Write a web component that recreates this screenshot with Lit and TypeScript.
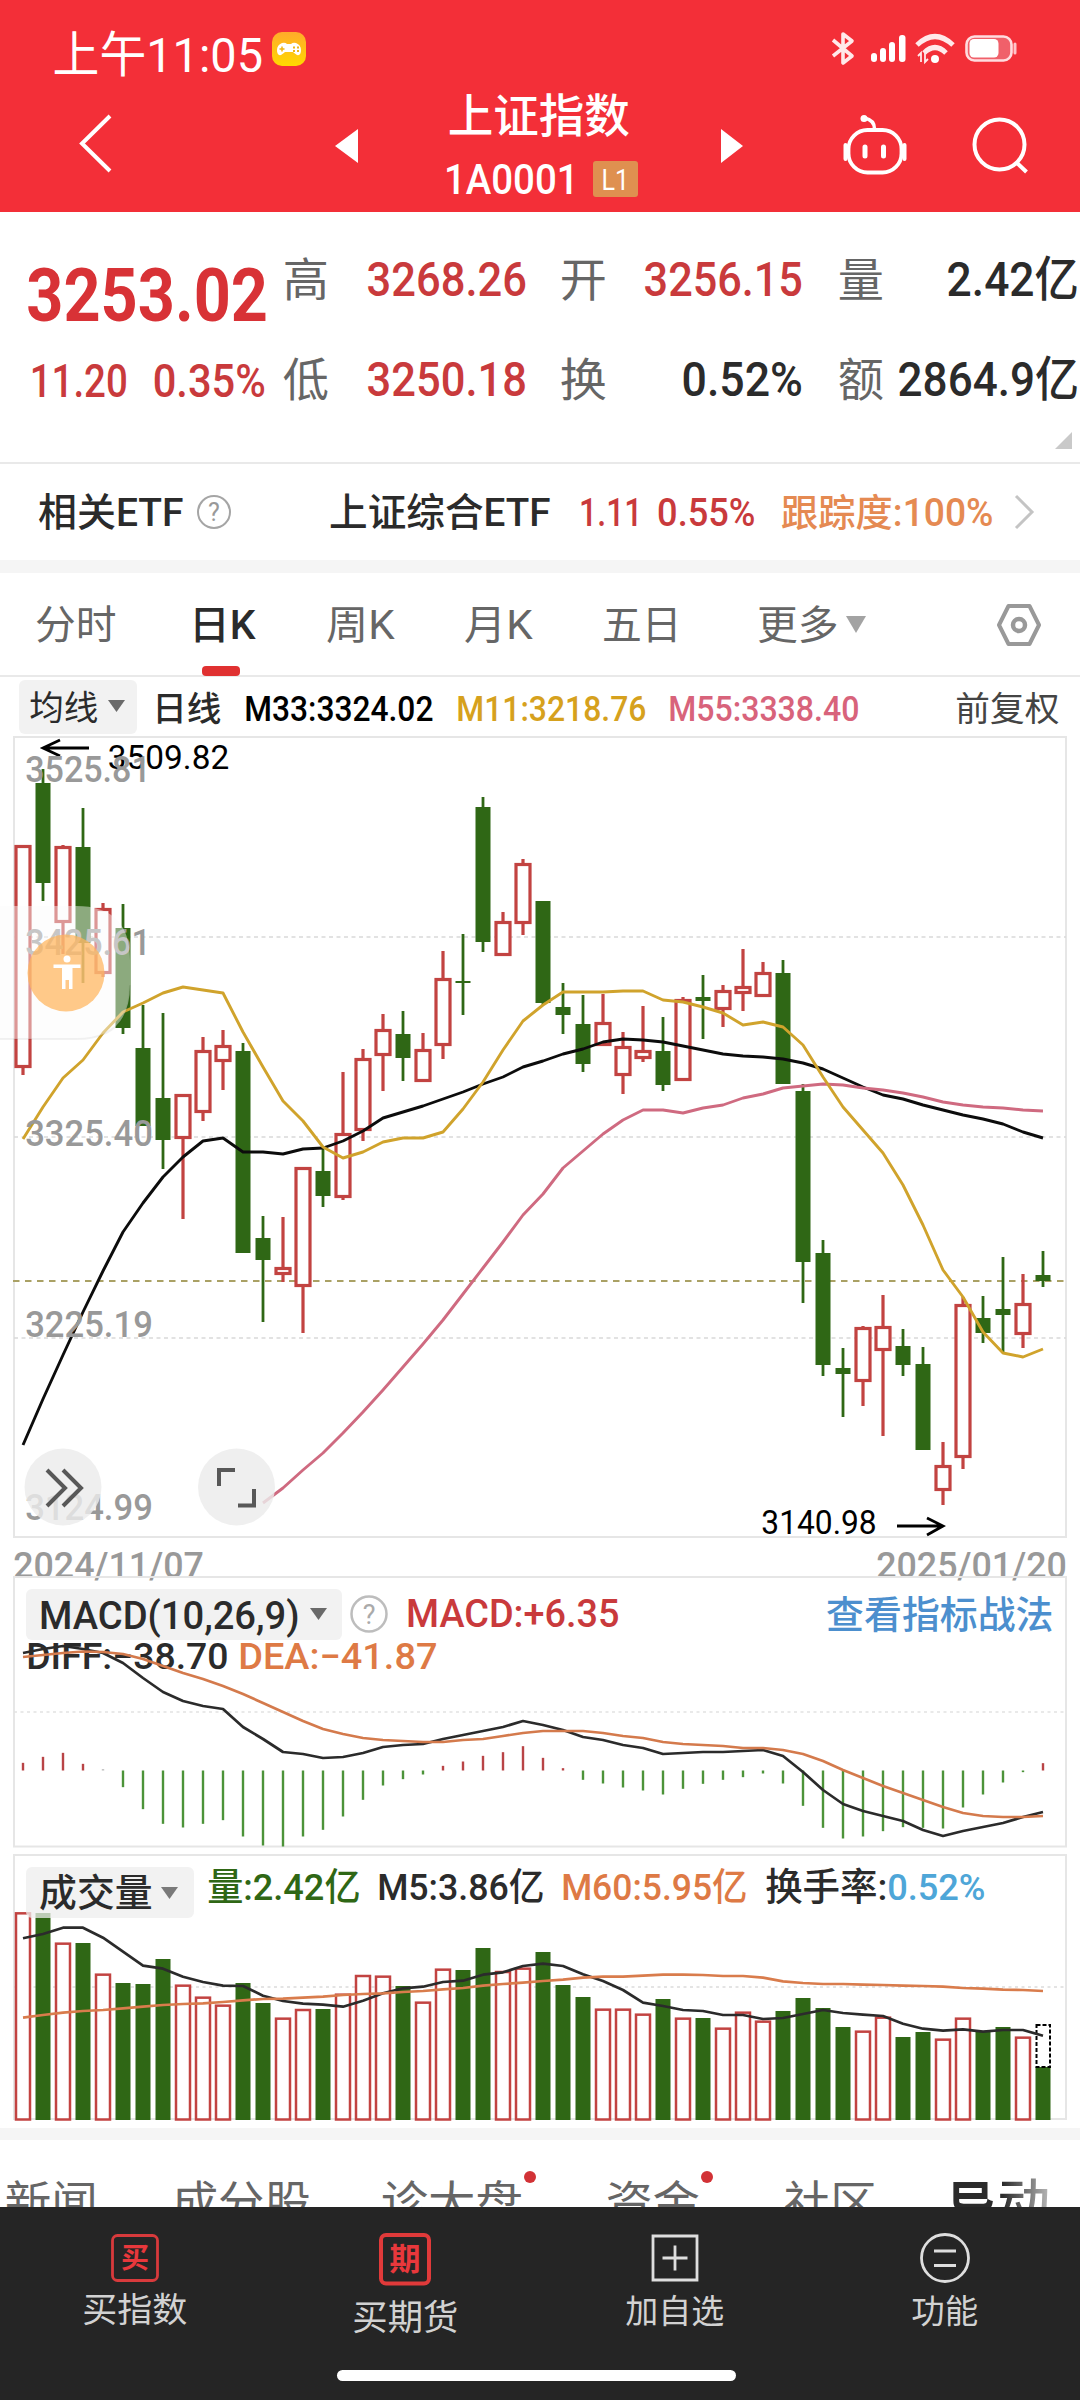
import { LitElement, html, svg, css } from "lit";
import { customElement } from "lit/decorators.js";

const CAP = 0.711;

/** Text set to a fixed ink width; the box is exactly one cap height tall. */
const fit = (text: string, width: number, size: number, cls = "") => html`
  <svg class="fit ${cls}" width=${width} height=${Math.round(size * CAP)}>
    <text x=${-size * 0.05} y=${Math.round(size * CAP)} font-size=${size}
      textLength=${width + size * 0.09} lengthAdjust="spacingAndGlyphs">${text}</text>
  </svg>`;

/** The same, for labels placed on a chart canvas. y is the baseline. */
const mark = (text: string, x: number, y: number, width: number, size: number, cls: string) => svg`
  <text class=${cls} x=${x - size * 0.05} y=${y} font-size=${size}
    textLength=${width + size * 0.1} lengthAdjust="spacingAndGlyphs">${text}</text>`;

const X0 = 23;
const STEP = 20;
const cx = (i: number) => X0 + i * STEP;
const line = (values: number[], start = 0, f = (v: number) => v) =>
  values.map((v, i) => `${cx(i + start)},${f(v).toFixed(1)}`).join(" ");

type Candle = [string, number, number, number, number];
const CANDLES: Candle[] = [
  ["r", 845, 845, 1068, 1075], ["g", 769, 783, 883, 901], ["r", 845, 846, 923, 954], ["g", 808, 847, 943, 983],
  ["r", 903, 908, 974, 977], ["g", 904, 928, 1028, 1034], ["g", 1005, 1048, 1126, 1126], ["g", 1013, 1098, 1140, 1169],
  ["r", 1094, 1094, 1139, 1219], ["r", 1037, 1050, 1113, 1121], ["r", 1030, 1045, 1062, 1090], ["g", 1043, 1051, 1253, 1253],
  ["g", 1216, 1238, 1260, 1322], ["r", 1217, 1267, 1275, 1282], ["r", 1167, 1167, 1287, 1333], ["g", 1149, 1171, 1196, 1207],
  ["r", 1072, 1133, 1198, 1200], ["r", 1049, 1058, 1131, 1141], ["r", 1014, 1029, 1056, 1091], ["g", 1011, 1034, 1058, 1081],
  ["r", 1033, 1049, 1082, 1082], ["r", 951, 978, 1046, 1059], ["g", 934, 981, 983, 1015], ["g", 797, 807, 942, 952],
  ["r", 912, 921, 956, 956], ["r", 859, 863, 924, 935], ["g", 901, 901, 1003, 1005], ["g", 983, 1007, 1015, 1034],
  ["g", 995, 1024, 1064, 1072], ["r", 994, 1022, 1046, 1046], ["r", 1032, 1046, 1076, 1094], ["r", 1006, 1050, 1059, 1062],
  ["g", 1017, 1051, 1085, 1091], ["r", 997, 999, 1081, 1081], ["g", 975, 997, 1001, 1039], ["r", 985, 990, 1010, 1027],
  ["r", 949, 986, 994, 1011], ["r", 962, 972, 997, 997], ["g", 960, 973, 1084, 1084], ["g", 1084, 1091, 1262, 1303],
  ["g", 1240, 1253, 1365, 1376], ["g", 1348, 1368, 1374, 1417], ["r", 1326, 1327, 1382, 1406], ["r", 1295, 1326, 1351, 1436],
  ["g", 1329, 1346, 1365, 1376], ["g", 1347, 1364, 1450, 1450], ["r", 1442, 1465, 1491, 1505], ["r", 1297, 1304, 1458, 1469],
  ["g", 1296, 1318, 1333, 1343], ["g", 1257, 1309, 1315, 1353], ["r", 1274, 1303, 1335, 1348], ["g", 1251, 1275, 1281, 1287],
];

const MA11 = [1139, 1107, 1078, 1060, 1033, 1012, 1003, 993, 987, 990, 993, 1032, 1067, 1101, 1121, 1147, 1158, 1152, 1142,
  1138, 1138, 1132, 1109, 1082, 1050, 1021, 1005, 992, 992, 992, 991, 991, 1000, 1002, 1007, 1013, 1025, 1022, 1027, 1045,
  1077, 1107, 1130, 1153, 1185, 1225, 1270, 1297, 1332, 1353, 1357, 1349];
const MA33 = [1445, 1399, 1355, 1312, 1271, 1232, 1203, 1177, 1157, 1141, 1138, 1152, 1152, 1154, 1149, 1148, 1141, 1131,
  1118, 1112, 1106, 1099, 1092, 1084, 1077, 1067, 1061, 1054, 1049, 1042, 1039, 1040, 1042, 1046, 1050, 1054, 1056, 1057,
  1059, 1063, 1069, 1078, 1087, 1095, 1099, 1105, 1110, 1115, 1119, 1124, 1132, 1138];
const MA55 = [1503, 1488, 1470, 1453, 1433, 1412, 1390, 1367, 1344, 1320, 1294, 1268, 1242, 1215, 1194, 1168, 1151, 1134,
  1120, 1110, 1110, 1113, 1108, 1105, 1098, 1094, 1088, 1086, 1084, 1085, 1088, 1090, 1093, 1097, 1102, 1105, 1107, 1108,
  1110, 1111];

const DIFF = [1653, 1649, 1646, 1649, 1653, 1663, 1678, 1692, 1701, 1706, 1709, 1727, 1739, 1752, 1754, 1758, 1757, 1753,
  1747, 1745, 1744, 1739, 1735, 1731, 1727, 1721, 1725, 1730, 1737, 1740, 1745, 1748, 1754, 1753, 1752, 1752, 1751, 1750,
  1756, 1772, 1790, 1804, 1811, 1816, 1821, 1830, 1836, 1831, 1827, 1823, 1817, 1812];
const DEA = [1657, 1655, 1653, 1651.5, 1652, 1654, 1659, 1666, 1673, 1679, 1686, 1694, 1703, 1712, 1721, 1729, 1734, 1738,
  1740, 1741, 1742, 1742, 1740, 1739, 1736, 1733, 1731, 1731, 1731, 1733, 1736, 1738, 1742, 1744, 1745, 1746, 1748, 1748,
  1750, 1754, 1761, 1770, 1778, 1786, 1793, 1800, 1807, 1813, 1816, 1817, 1817, 1816];
const HIST = [-23, -41, -53, -20, -4, 50, 116, 160, 171, 160, 149, 198, 225, 228, 198, 178, 138, 88, 45, 26, 12, -14, -27,
  -44, -55, -73, -38, -7, 28, 39, 51, 60, 72, 55, 40, 28, 20, 9, 39, 106, 172, 204, 198, 182, 170, 172, 174, 111, 72, 36,
  5, -22];

const VOL = [187, 189, 278, 279, 371, 399, 402, 327, 404, 440, 464, 399, 459, 503, 477, 477, 431, 375, 377, 408, 455, 356,
  360, 294, 363, 353, 306, 405, 441, 476, 476, 491, 447, 503, 504, 533, 485, 512, 483, 444, 474, 531, 542, 500, 561, 546,
  566, 503, 543, 531, 560, 651];
const VM5 = [265, 252, 233, 233, 263, 305, 347, 356, 380, 396, 407, 408, 437, 453, 461, 464, 470, 452, 430, 415, 410, 396,
  392, 374, 367, 348, 341, 348, 373, 393, 420, 458, 468, 480, 483, 495, 495, 507, 504, 492, 480, 489, 494, 498, 521, 536,
  542, 538, 545, 540, 540, 557];
const VM60 = [503, 495, 488, 483, 480, 475, 470, 465, 462, 460, 456, 451, 447, 446, 443, 440, 435, 432, 430, 426, 423, 418,
  414, 407, 402, 398, 393, 389, 383, 380, 380, 377, 374, 374, 375, 378, 378, 383, 394, 399, 402, 402, 404, 405, 407, 408,
  410, 414, 416, 419, 420, 423];
const vy = (v: number) => 1850 + v / 3;

const shared = css`
  :host { display: block; font-family: Roboto, "Noto Sans CJK SC", sans-serif; }
  svg { display: block; overflow: visible; flex: none; }
  text { font-family: Roboto, "Noto Sans CJK SC", sans-serif; white-space: pre; }
  .fit { fill: #2b2b2b; }
  .fit.w { fill: #fff; }
  .fit.r { fill: #c93a3c; }
  .fit.gray { fill: #666; }
  .fit.orange { fill: #e58a52; }
  .fit.m { font-weight: 500; }
  .fit.b { font-weight: 700; }
`;

@customElement("quote-header")
class QuoteHeader extends LitElement {
  static styles = [shared, css`
    .bar { background: #f32f38; height: 212px; display: flex; flex-direction: column; }
    .status { height: 84px; display: flex; align-items: flex-start; box-sizing: border-box; padding: 32px 62px 0 55px; }
    .status .fit { margin-top: 5px; }
    .badge { margin-left: 11px; }
    .sys { margin-left: auto; margin-top: 0; }
    .nav { flex: 1; display: grid; grid-template-columns: 256px 110px 350px 128px 118px 118px; align-items: start; }
    .back { padding: 31px 0 0 79px; }
    .prev { padding: 45px 0 0 79px; }
    .title { padding: 15px 0 0 84px; display: flex; flex-direction: column; gap: 32px; }
    .code { display: flex; align-items: center; gap: 16px; margin: -3px 0 0 -4px; }
    .l1 { background: #df9050; border-radius: 3px; width: 45px; height: 36px; display: grid; place-items: center; }
    .next { padding: 45px 0 0 5px; }
    .bot { padding: 31px 0 0 0; }
    .find { padding: 34px 0 0 10px; }
  `];
  render() {
    return html`<div class="bar">
      <div class="status">
        ${fit("上午11:05", 206, 49, "w")}
        <svg class="badge" width="34" height="34" viewBox="0 0 34 34">
          <defs><linearGradient id="y" x2="0" y2="1"><stop offset="0" stop-color="#ffab2b"/><stop offset="1" stop-color="#ffd900"/></linearGradient></defs>
          <rect width="34" height="34" rx="10" fill="url(#y)"/>
          <path d="M10 11q3-1 5 1h4q2-2 5-1 5 2 5 7 0 6-4 5-3-2-4-3h-8q-1 1-4 3-4 1-4-5 0-5 5-7z" fill="#fff"/>
          <path d="M7.500 17h5M10 14.500v5" stroke="#eeb415" stroke-width="1.500"/>
          <path d="M21 15.500h2M25 15.500h2M21 19h2M25 19h2" stroke="#eeb415" stroke-width="1.800"/>
        </svg>
        <svg class="sys" width="187" height="32" viewBox="832 33 187 32">
          <path d="M834 41l19 16-9 7V35l9 7-19 15" fill="none" stroke="#ffe9ea" stroke-width="3.600" stroke-linejoin="round"/>
          <g fill="#fff"><rect x="872" y="54" width="6" height="9" rx="3"/><rect x="881" y="49" width="6" height="14" rx="3"/><rect x="890" y="43" width="6" height="20" rx="3"/><rect x="900" y="36" width="6.500" height="27" rx="3"/></g>
          <path d="M918 46q18-17 36 0M925 54q11-11 22 0" fill="none" stroke="#ffe9ea" stroke-width="5"/>
          <circle cx="936" cy="60" r="4" fill="#fff"/>
          <path d="M922 63v-9l-3 3M926 54v9l3-3" fill="none" stroke="#ffe9ea" stroke-width="1.800"/>
          <rect x="967.500" y="37.500" width="45" height="24" rx="8" fill="#f0606a" stroke="#ffdcdf" stroke-width="2.600"/>
          <rect x="970.500" y="40" width="29" height="18.500" rx="4.500" fill="#fff"/>
          <path d="M1016 45v9" stroke="#ffc4c8" stroke-width="3" stroke-linecap="round"/>
        </svg>
      </div>
      <div class="nav">
        <div class="back"><svg width="33" height="57" viewBox="0 0 33 57"><path d="M31 1L3 28.500 31 56" fill="none" stroke="#fff" stroke-width="4"/></svg></div>
        <div class="prev"><svg width="23" height="34" viewBox="0 0 23 34"><path d="M23 0v34L0 17z" fill="#fff"/></svg></div>
        <div class="title">
          ${fit("上证指数", 178, 46, "w m")}
          <div class="code">
            ${fit("1A0001", 131, 42, "w m")}
            <div class="l1">${fit("L1", 25, 29, "w")}</div>
          </div>
        </div>
        <div class="next"><svg width="22" height="34" viewBox="0 0 22 34"><path d="M0 0v34l22-17z" fill="#fff"/></svg></div>
        <div class="bot"><svg width="64" height="60" viewBox="845 115 64 60">
          <rect x="849.500" y="130" width="53" height="42.500" rx="19" fill="none" stroke="#fff" stroke-width="3.800"/>
          <path d="M846.500 145v14M905.500 145v14" stroke="#fff" stroke-width="4" stroke-linecap="round"/>
          <path d="M875.500 129q0-9-10-11" fill="none" stroke="#fff" stroke-width="3.500"/><circle cx="865" cy="118.500" r="3.500" fill="#fff"/>
          <path d="M866 147v9M884.500 147v9" stroke="#fff" stroke-width="5" stroke-linecap="round"/>
        </svg></div>
        <div class="find"><svg width="56" height="56" viewBox="972 118 56 56">
          <circle cx="999.500" cy="144.500" r="25" fill="none" stroke="#fff" stroke-width="4"/>
          <path d="M1017 163l9.500 9" stroke="#fff" stroke-width="4"/>
        </svg></div>
      </div>
    </div>`;
  }
}

@customElement("quote-summary")
class QuoteSummary extends LitElement {
  static styles = [shared, css`
    .sum { height: 252px; display: flex; box-sizing: border-box; padding-left: 30px; border-bottom: 2px solid #e9e9e9; position: relative; }
    .left { width: 255px; display: flex; flex-direction: column; padding-top: 56px; gap: 44px; }
    .left .fit.p { fill: #d83236; }
    .chg { display: flex; gap: 29px; padding-left: 2px; }
    .grid { display: grid; grid-template-columns: 83px 157px 120px 156px 83px 193px; grid-template-rows: 34px 34px; row-gap: 66px; padding-top: 50px; align-items: end; }
    .grid .v { justify-self: end; }
    .c3 { margin-left: 37px; }
    .c5 { margin-left: 39px; }
    .corner { position: absolute; right: 8px; bottom: 13px; }
    .etf { height: 96px; display: flex; align-items: flex-start; padding-left: 40px; box-sizing: border-box; border-bottom: 0; }
    .etf .fit { margin-top: 35px; }
    .etf .q { margin: 30px 0 0 14px; }
    .n1 { margin-left: 99px; } .n2 { margin-left: 32px; } .n3 { margin-left: 18px; } .n4 { margin-left: 29px; }
    .etf .go { margin: 31px 0 0 22px; }
    .band { height: 13px; background: #f5f5f5; }
  `];
  render() {
    return html`
      <div class="sum">
        <div class="left">
          ${fit("3253.02", 235, 75, "p b")}
          <div class="chg">${fit("11.20", 94, 45.500, "r m")}${fit("0.35%", 109, 45.500, "r m")}</div>
        </div>
        <div class="grid">
          ${fit("高", 42, 46, "gray")}${fit("3268.26", 156, 48, "r m v")}
          ${fit("开", 43, 46, "gray c3")}${fit("3256.15", 155, 48, "r m v")}
          ${fit("量", 42, 46, "gray c5")}${fit("2.42亿", 128, 48, "m v")}
          ${fit("低", 42, 46, "gray")}${fit("3250.18", 156, 48, "r m v")}
          ${fit("换", 43, 46, "gray c3")}${fit("0.52%", 117, 48, "m v")}
          ${fit("额", 42, 46, "gray c5")}${fit("2864.9亿", 177, 48, "m v")}
        </div>
        <svg class="corner" width="17" height="17"><path d="M17 0v17H0z" fill="#c9c9c9"/></svg>
      </div>
      <div class="etf">
        ${fit("相关ETF", 142, 38.500, "m")}
        <svg class="q" width="36" height="36" viewBox="-18 -18 36 36"><circle r="16" fill="none" stroke="#a5a5a5" stroke-width="2"/><text y="9" font-size="25" text-anchor="middle" fill="#999">?</text></svg>
        <div class="n1">${fit("上证综合ETF", 218, 38.500, "m")}</div>
        <div class="n2">${fit("1.11", 60, 38, "r m")}</div>
        <div class="n3">${fit("0.55%", 95, 38, "r m")}</div>
        <div class="n4">${fit("跟踪度:100%", 209, 38, "orange m")}</div>
        <svg class="go" width="20" height="34"><path d="M2 1l16 16L2 33" fill="none" stroke="#c4c4c4" stroke-width="3"/></svg>
      </div>
      <div class="band"></div>`;
  }
}

@customElement("period-tabs")
class PeriodTabs extends LitElement {
  static styles = [shared, css`
    .tabs { height: 104px; box-sizing: border-box; border-bottom: 2px solid #e9e9e9; display: grid;
      grid-template-columns: 154px 137px 138px 138px 155px 87px 151px 50px; padding-left: 37px; align-items: start; }
    .tabs .fit { margin-top: 38px; }
    .on { display: flex; flex-direction: column; gap: 27px; }
    .on i { width: 38px; height: 10px; border-radius: 4px; background: #e03131; margin-left: 11px; }
    .tri { margin-top: 43px; }
    .hex { margin-top: 30px; }
    .ma { height: 60px; display: flex; align-items: flex-start; padding: 3px 0 0 19px; box-sizing: border-box; }
    .pick { width: 118px; height: 54px; border-radius: 6px; background: #f2f2f2; display: flex; gap: 11px; padding: 15px 0 0 12px; box-sizing: border-box; }
    .pick .tri2 { margin-top: 5px; }
    .ma > .fit { margin-top: 16px; }
    .a { margin-left: 17px; } .b1 { margin-left: 26px; } .c { margin-left: 26px; } .d { margin-left: 25px; } .e { margin-left: 99px; }
    .b1.fit { fill: #000; } .c.fit { fill: #d6a11d; } .d.fit { fill: #d8637b; } .e.fit { fill: #444; }
  `];
  render() {
    return html`
      <div class="tabs">
        ${fit("分时", 78, 40, "gray")}
        <div class="on">${fit("日K", 63, 40, "m")}<i></i></div>
        ${fit("周K", 65, 40, "gray")}${fit("月K", 65, 40, "gray")}${fit("五日", 76, 40, "gray")}${fit("更多", 78, 40, "gray")}
        <svg class="tri" width="20" height="17"><path d="M0 0h20L10 17z" fill="#a3a3a3"/></svg>
        <svg class="hex" width="44" height="44" viewBox="-22 -22 44 44"><path d="M-10.500 -19h21L20 0 10.500 19h-21L-20 0z" fill="none" stroke="#999" stroke-width="4" stroke-linejoin="round"/><circle r="6" fill="none" stroke="#999" stroke-width="4.500"/></svg>
      </div>
      <div class="ma">
        <div class="pick">${fit("均线", 66, 34.500)}<svg class="tri2" width="17" height="12"><path d="M0 0h17L8.500 12z" fill="#6a6a6a"/></svg></div>
        ${fit("日线", 66, 34.500, "a m")}
        ${fit("M33:3324.02", 186, 35.500, "b1 m")}
        ${fit("M11:3218.76", 187, 35.500, "c m")}
        ${fit("M55:3338.40", 188, 35.500, "d m")}
        ${fit("前复权", 101, 34.500, "e")}
      </div>`;
  }
}

@customElement("k-chart")
class KChart extends LitElement {
  static styles = [shared, css`
    .frame { fill: none; stroke: #e6e6e6; stroke-width: 2; }
    .grid { stroke: #d9d9d9; stroke-width: 1.500; stroke-dasharray: 4 3.500; fill: none; }
    .r { stroke: #c24341; fill: #fff; stroke-width: 3.200; }
    .g { stroke: #2f6715; fill: #2f6715; stroke-width: 2.800; }
    .g rect { stroke: none; }
    .ln { fill: none; stroke-width: 2.900; stroke-linejoin: round; }
    .axis { fill: #999; font-weight: 500; }
    .ext { fill: #000; }
  `];
  render() {
    return html`<svg width="1080" height="840" viewBox="0 737 1080 840">
      <rect class="frame" x="14" y="737" width="1052" height="800"/>
      <path class="grid" d="M14 937H1066M14 1137H1066M14 1338H1066"/>
      <path d="M13 1281H1066" stroke="#aaa165" stroke-width="2" stroke-dasharray="6.500 5.500"/>
      ${CANDLES.map(([c, hi, t, b, lo], i) => {
        const x = cx(i);
        return c === "g"
          ? svg`<g class="g"><path d="M${x} ${hi}V${lo}"/><rect x=${x - 7.5} y=${t} width="15" height=${b - t}/></g>`
          : svg`<g class="r"><path d="M${x} ${hi}V${t + 1}M${x} ${b - 1}V${lo}"/><rect x=${x - 7} y=${t + 1.5} width="14" height=${b - t - 3}/></g>`;
      })}
      <polyline class="ln" stroke="#0c0c0c" points=${line(MA33)}/>
      <polyline class="ln" stroke="#cf6a80" points=${line(MA55, 12)}/>
      <polyline class="ln" stroke="#d0a32c" points=${line(MA11)}/>
      <path d="M43 748H89M60 740L43 748 60 756" fill="none" stroke="#000" stroke-width="2.800"/>
      ${mark("3509.82", 109.5, 769, 118, 33.5, "ext")}
      <path d="M897 1526H943M927 1518L943 1526 927 1535" fill="none" stroke="#000" stroke-width="2.800"/>
      ${mark("3140.98", 763, 1534, 112, 33.5, "ext")}
      ${mark("3525.81", 27, 782, 122, 36.5, "axis")}
      ${mark("3425.61", 27, 955, 122, 36.5, "axis")}
      ${mark("3325.40", 27, 1146, 124, 36.5, "axis")}
      ${mark("3225.19", 27, 1337, 124, 36.5, "axis")}
      ${mark("3124.99", 27, 1520, 124, 36.5, "axis")}
      ${mark("2024/11/07", 15, 1578, 187, 36.5, "axis")}
      ${mark("2025/01/20", 878, 1578, 187, 36.5, "axis")}
      <path d="M0 906H76Q130 906 130 960V985Q130 1039 76 1039H0z" fill="#fafafa" fill-opacity=".46"/>
      <path d="M0 1039H76Q130 1039 130 985" fill="none" stroke="#000" stroke-opacity=".05" stroke-width="2"/>
      <circle cx="66" cy="973" r="38.500" fill="#ffb45c" fill-opacity=".72"/>
      <g fill="#fff"><circle cx="67" cy="959" r="3.500"/><path d="M53.500 964.500h27v3.500h-8v21h-3.500v-9h-3.500v9h-3.500v-21h-8.500z"/></g>
      <g fill="#ebebeb" fill-opacity=".82"><circle cx="63" cy="1487" r="38.500"/><circle cx="236.500" cy="1487" r="38.500"/></g>
      <path d="M47 1470L65 1488 47 1506M63 1470L81 1488 63 1506M219 1486V1470H235M238 1505.500H254V1489" fill="none" stroke="#585858" stroke-width="4"/>
    </svg>`;
  }
}

@customElement("macd-panel")
class MacdPanel extends LitElement {
  static styles = [shared, css`
    :host { position: relative; height: 275px; }
    .frame { fill: none; stroke: #e6e6e6; stroke-width: 2; }
    .grid { stroke: #e2e2e2; stroke-width: 1.500; stroke-dasharray: 3 3.500; }
    .ln { fill: none; stroke-width: 2.700; stroke-linejoin: round; }
    .legend { position: absolute; left: 26px; top: 12px; right: 28px; display: flex; flex-direction: column; gap: 3px; }
    .row { display: flex; align-items: flex-start; }
    .pick { width: 316px; height: 51px; border-radius: 6px; background: #f2f2f2; display: flex; gap: 12px; padding: 13px 0 0 15px; box-sizing: border-box; }
    .tri { margin-top: 6px; }
    .q { margin: 6px 0 0 8px; }
    .row .val { margin: 11px 0 0 20px; }
    .link { margin: 12px 0 0 auto; }
    .link.fit { fill: #4c8fce; }
    .two { gap: 13px; padding-left: 2px; }
    .dea.fit { fill: #de7a45; }
    .over { position: absolute; left: 0; top: 0; }
  `];
  render() {
    return html`<svg width="1080" height="275" viewBox="0 1577 1080 275">
        <rect class="frame" x="14" y="1577" width="1052" height="269.500"/>
        <path class="grid" d="M14 1712H1066"/>
        ${HIST.map((v, i) => svg`<path d="M${cx(i)} 1770.500V${1770.5 + v / 3}" stroke=${v > 0 ? "#4c9339" : i === 4 ? "#bbb" : "#b94446"} stroke-width="2.400"/>`)}
      </svg>
      <div class="legend">
        <div class="row">
          <div class="pick">${fit("MACD(10,26,9)", 257, 38, "m")}<svg class="tri" width="17" height="12"><path d="M0 0h17L8.500 12z" fill="#6a6a6a"/></svg></div>
          <svg class="q" width="38" height="38" viewBox="-19 -19 38 38"><circle r="17.500" fill="none" stroke="#bdbdbd" stroke-width="2.500"/><text y="9.500" font-size="27" text-anchor="middle" fill="#aaa">?</text></svg>
          ${fit("MACD:+6.35", 210, 38.500, "r m val")}
          ${fit("查看指标战法", 224, 38, "link m")}
        </div>
        <div class="row two">${fit("DIFF:−38.70", 199, 36.500, "m")}${fit("DEA:−41.87", 196, 36.500, "dea m")}</div>
      </div>
      <svg class="over" width="1080" height="275" viewBox="0 1577 1080 275">
        <polyline class="ln" stroke="#2b2b2b" points=${line(DIFF)}/>
        <polyline class="ln" stroke="#d47a4c" points=${line(DEA)}/>
      </svg>`;
  }
}

@customElement("volume-panel")
class VolumePanel extends LitElement {
  static styles = [shared, css`
    :host { position: relative; height: 276px; }
    .frame { fill: none; stroke: #e6e6e6; stroke-width: 2; }
    .grid { stroke: #dcdcdc; stroke-width: 1.500; stroke-dasharray: 3 3.500; }
    .r { stroke: #c24341; fill: #fff; stroke-width: 2.500; }
    .g { fill: #2f6715; }
    .ln { fill: none; stroke-width: 2.700; stroke-linejoin: round; }
    .legend { position: absolute; left: 26px; top: 15px; display: flex; align-items: flex-start; }
    .pick { width: 168px; height: 51px; border-radius: 6px; background: rgba(238, 238, 238, .75); display: flex; gap: 10px; padding: 12px 0 0 15px; box-sizing: border-box; }
    .tri { margin-top: 8px; }
    .legend > .fit { margin-top: 6px; }
    .a { margin-left: 15px; } .b1 { margin-left: 20px; } .c { margin-left: 20px; } .d { margin-left: 21px; } .e { margin-left: 3px; }
    .a.fit { fill: #2f6715; } .c.fit { fill: #de7a45; } .e.fit { fill: #4ea6d8; }
  `];
  render() {
    return html`<svg width="1080" height="276" viewBox="0 1852 1080 276">
        <rect class="frame" x="14" y="1855" width="1052" height="264"/>
        <path class="grid" d="M14 1987H1066"/>
        ${VOL.map((v, i) => CANDLES[i][0] === "g"
          ? svg`<rect class="g" x=${cx(i) - 7.5} y=${vy(v)} width="15" height=${2120 - vy(v)}/>`
          : svg`<rect class="r" x=${cx(i) - 7} y=${vy(v) + 1} width="14" height=${2118.5 - vy(v)}/>`)}
        <rect x="1036.500" y="2025" width="13.500" height="42" fill="#fff" stroke="#000" stroke-width="2" stroke-dasharray="4 2"/>
        <polyline class="ln" stroke="#2b2b2b" points=${line(VM5, 0, vy)}/>
        <polyline class="ln" stroke="#d97c4c" points=${line(VM60, 0, vy)}/>
      </svg>
      <div class="legend">
        <div class="pick">${fit("成交量", 110, 38, "m")}<svg class="tri" width="17" height="12"><path d="M0 0h17L8.500 12z" fill="#7a7a7a"/></svg></div>
        ${fit("量:2.42亿", 150, 37.500, "a m")}
        ${fit("M5:3.86亿", 164, 37.500, "b1 m")}
        ${fit("M60:5.95亿", 183, 37.500, "c m")}
        ${fit("换手率:", 119, 37.500, "d m")}
        ${fit("0.52%", 95, 37.500, "e m")}
      </div>`;
  }
}

@customElement("bottom-area")
class BottomArea extends LitElement {
  static styles = [shared, css`
    .band { height: 12px; background: #f5f5f5; }
    .news { height: 67px; overflow: hidden; display: grid; grid-template-columns: 167px 209px 225px 178px 164px 120px; padding-left: 7px; align-items: start; }
    .news .fit { margin-top: 46px; }
    .hot { display: flex; align-items: flex-start; gap: 3px; }
    .hot i { width: 12px; height: 12px; border-radius: 50%; background: #d23236; margin-top: 31px; }
    .fade { display: flex; gap: 7px; -webkit-mask-image: linear-gradient(90deg, #000 44%, rgba(0, 0, 0, .35) 82%); height: 67px; }
    .news .fade .x { margin-top: 48px; }
    .news .fade .y { margin-top: 44px; }
    .dock { height: 193px; background: #252525; display: flex; flex-direction: column; }
    .acts { height: 163px; display: grid; grid-template-columns: repeat(4, 270px); justify-items: center; align-items: start; }
    .act { display: flex; flex-direction: column; align-items: center; padding-top: 25px; }
    .act .fit { fill: #d2d2d2; }
    .buy .fit:last-child { margin-top: 13px; }
    .fut .fit:last-child { margin-top: 19px; }
    .add .fit:last-child { margin-top: 16px; }
    .home { width: 399px; height: 11px; border-radius: 6px; background: #fff; margin-left: 337px; }
    .icon text { font-family: "Noto Sans CJK SC", sans-serif; font-weight: 700; fill: #e8383c; }
  `];
  render() {
    return html`
      <div class="band"></div>
      <div class="news">
        ${fit("新闻", 89, 46, "gray")}
        ${fit("成分股", 135, 46, "gray")}
        <div class="hot">${fit("诊大盘", 138, 46, "gray")}<i></i></div>
        <div class="hot">${fit("资金", 90, 46, "gray")}<i></i></div>
        ${fit("社区", 89, 46, "gray")}
        <div class="fade">${fit("异", 43, 60, "b x")}${fit("动", 48, 50, "m y")}</div>
      </div>
      <div class="dock">
        <div class="acts">
          <div class="act buy">
            <svg class="icon" width="50" height="52" viewBox="-25 -26 50 52"><rect x="-22.500" y="-22.500" width="45" height="45" rx="5" fill="none" stroke="#d83a3c" stroke-width="2.800"/><text y="10" font-size="28" text-anchor="middle">买</text></svg>
            ${fit("买指数", 102, 34.5)}
          </div>
          <div class="act fut">
            <svg class="icon" width="52" height="54" viewBox="-26 -27 52 54"><rect x="-24" y="-24" width="48" height="48.500" rx="5" fill="none" stroke="#e03a3a" stroke-width="4"/><text y="11" font-size="31" text-anchor="middle">期</text></svg>
            ${fit("买期货", 103, 35.5)}
          </div>
          <div class="act add">
            <svg width="50" height="52" viewBox="-25 -26 50 52"><path d="M-22 -22H22V22H-22zM0 -12.500V12.500M-12.500 0H12.500" fill="none" stroke="#dedede" stroke-width="2.800"/></svg>
            ${fit("加自选", 96, 33)}
          </div>
          <div class="act add">
            <svg width="50" height="52" viewBox="-25 -26 50 52"><circle r="23.500" fill="none" stroke="#dedede" stroke-width="2.800"/><path d="M-11 -7H11M-11 7.500H11" stroke="#dedede" stroke-width="2.800"/></svg>
            ${fit("功能", 64, 33)}
          </div>
        </div>
        <div class="home"></div>
      </div>`;
  }
}

@customElement("app-root")
class AppRoot extends LitElement {
  static styles = css`
    :host { display: block; width: 1080px; height: 2400px; background: #fff; overflow: hidden; }
  `;
  render() {
    return html`
      <quote-header></quote-header>
      <quote-summary></quote-summary>
      <period-tabs></period-tabs>
      <k-chart></k-chart>
      <macd-panel></macd-panel>
      <volume-panel></volume-panel>
      <bottom-area></bottom-area>`;
  }
}
